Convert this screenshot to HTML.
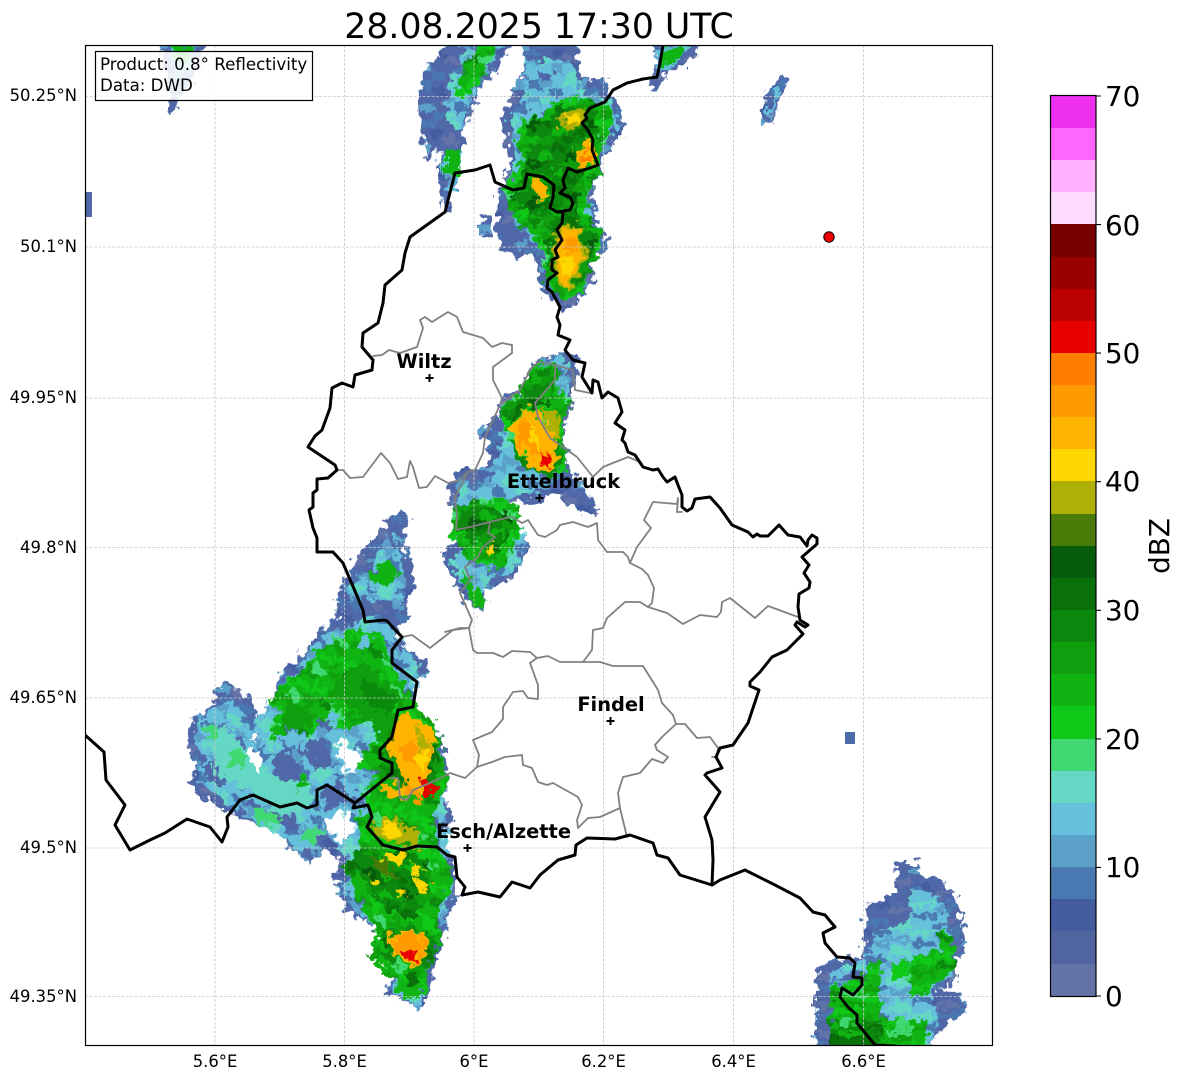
<!DOCTYPE html>
<html><head><meta charset="utf-8"><style>
html,body{margin:0;padding:0;background:#fff;width:1184px;height:1081px;overflow:hidden}
svg{display:block}
text{font-family:"DejaVu Sans","Liberation Sans",sans-serif;fill:#000}
.t{font-size:16.4px;fill:#111}
.l{font-size:19.4px;font-weight:bold;text-anchor:middle}
.c{font-size:27.8px}
.g{stroke:#c8c8c8;stroke-width:.8;stroke-dasharray:3 1.5;fill:none}
.b{fill:none;stroke:#000;stroke-width:3;stroke-linejoin:round;stroke-linecap:round}
.i{fill:none;stroke:#808080;stroke-width:1.8;stroke-linejoin:round;stroke-linecap:round}
</style></head><body>
<svg width="1184" height="1081" viewBox="0 0 1184 1081" xmlns="http://www.w3.org/2000/svg">
<defs>
<filter id="n" filterUnits="userSpaceOnUse" x="80" y="40" width="920" height="1010" color-interpolation-filters="sRGB">
<feTurbulence type="fractalNoise" baseFrequency="0.13" numOctaves="2" seed="4" result="t"/>
<feComponentTransfer in="t" result="q">
<feFuncR type="discrete" tableValues="0 0 .1 .2 .35 .45 .55 .65 .8 .9 1 1"/>
<feFuncG type="discrete" tableValues="0 0 .1 .2 .35 .45 .55 .65 .8 .9 1 1"/>
<feFuncA type="discrete" tableValues="1"/>
</feComponentTransfer>
<feDisplacementMap in="SourceGraphic" in2="q" scale="13" xChannelSelector="R" yChannelSelector="G"/>
</filter>
<pattern id="bq" width="60" height="40" patternUnits="userSpaceOnUse">
<rect width="60" height="40" fill="#66c0dc"/>
<rect x="0" y="0" width="12" height="8" fill="#5aa0c8"/><rect x="24" y="0" width="12" height="8" fill="#64d8c4"/><rect x="48" y="0" width="12" height="8" fill="#4a78b0"/>
<rect x="12" y="8" width="12" height="8" fill="#4a78b0"/><rect x="36" y="8" width="12" height="8" fill="#64d8c4"/>
<rect x="0" y="16" width="12" height="8" fill="#64d8c4"/><rect x="24" y="16" width="12" height="8" fill="#5aa0c8"/><rect x="48" y="16" width="12" height="8" fill="#5aa0c8"/>
<rect x="12" y="24" width="12" height="8" fill="#5aa0c8"/><rect x="36" y="24" width="12" height="8" fill="#4a78b0"/>
<rect x="0" y="32" width="12" height="8" fill="#5068a8"/><rect x="24" y="32" width="12" height="8" fill="#64d8c4"/>
</pattern>
<pattern id="bo" width="60" height="40" patternUnits="userSpaceOnUse">
<rect width="60" height="40" fill="#5068a8"/>
<rect x="0" y="0" width="12" height="8" fill="#4a78b0"/><rect x="36" y="0" width="12" height="8" fill="#5aa0c8"/>
<rect x="12" y="8" width="12" height="8" fill="#435da0"/><rect x="48" y="8" width="12" height="8" fill="#4a78b0"/>
<rect x="24" y="16" width="12" height="8" fill="#6373a8"/><rect x="0" y="24" width="12" height="8" fill="#5aa0c8"/>
<rect x="36" y="24" width="12" height="8" fill="#435da0"/><rect x="12" y="32" width="12" height="8" fill="#4a78b0"/><rect x="48" y="32" width="12" height="8" fill="#6373a8"/>
</pattern>
<pattern id="gq" width="60" height="40" patternUnits="userSpaceOnUse">
<rect width="60" height="40" fill="#10b412"/>
<rect x="0" y="0" width="12" height="8" fill="#10c818"/><rect x="24" y="0" width="12" height="8" fill="#0e9e0e"/><rect x="48" y="0" width="12" height="8" fill="#10c818"/>
<rect x="12" y="8" width="12" height="8" fill="#0e9e0e"/><rect x="36" y="8" width="12" height="8" fill="#10c818"/>
<rect x="0" y="16" width="12" height="8" fill="#40d870"/><rect x="24" y="16" width="12" height="8" fill="#10c818"/><rect x="48" y="16" width="12" height="8" fill="#0c880e"/>
<rect x="12" y="24" width="12" height="8" fill="#10c818"/><rect x="36" y="24" width="12" height="8" fill="#0e9e0e"/>
<rect x="0" y="32" width="12" height="8" fill="#0e9e0e"/><rect x="24" y="32" width="12" height="8" fill="#40d870"/>
</pattern>
<pattern id="dq" width="60" height="40" patternUnits="userSpaceOnUse">
<rect width="60" height="40" fill="#0c880e"/>
<rect x="0" y="0" width="12" height="8" fill="#0a700a"/><rect x="24" y="0" width="12" height="8" fill="#0e9e0e"/><rect x="48" y="0" width="12" height="8" fill="#065c0a"/>
<rect x="12" y="8" width="12" height="8" fill="#10b412"/><rect x="36" y="8" width="12" height="8" fill="#0a700a"/>
<rect x="0" y="16" width="12" height="8" fill="#0e9e0e"/><rect x="24" y="16" width="12" height="8" fill="#0a700a"/><rect x="48" y="16" width="12" height="8" fill="#10b412"/>
<rect x="12" y="24" width="12" height="8" fill="#0a700a"/><rect x="36" y="24" width="12" height="8" fill="#0e9e0e"/>
<rect x="0" y="32" width="12" height="8" fill="#10b412"/><rect x="24" y="32" width="12" height="8" fill="#065c0a"/>
</pattern>
<pattern id="bqs" href="#bq" patternTransform="rotate(42) scale(1.2 .9)"/>
<pattern id="bos" href="#bo" patternTransform="rotate(42) scale(1.2 .9)"/>
<pattern id="gqs" href="#gq" patternTransform="rotate(42) scale(1.2 .9)"/>
<pattern id="dqs" href="#dq" patternTransform="rotate(42) scale(1.2 .9)"/>
<pattern id="bqe" href="#bq" patternTransform="scale(2 .7)"/>
<pattern id="boe" href="#bo" patternTransform="scale(2 .7)"/>
<pattern id="gqe" href="#gq" patternTransform="scale(2 .7)"/>
<pattern id="dqe" href="#dq" patternTransform="scale(2 .7)"/>
<clipPath id="ax"><rect x="85" y="45" width="908" height="1001"/></clipPath>
</defs>
<text x="539" y="38" text-anchor="middle" style="font-size:34.7px">28.08.2025 17:30 UTC</text>
<g clip-path="url(#ax)">
<g filter="url(#n)">
<!-- north -->
<g fill="url(#bo)">
<polygon points="450,40 513,40 500,63 483,83 472,110 463,140 460,163 450,190 452,212 443,210 438,173 442,150 427,160 420,133 418,90 425,70"/>
<polygon points="520,40 577,40 580,73 590,83 610,78 608,95 617,100 623,120 622,137 608,153 600,173 593,187 597,217 607,237 608,248 593,260 593,283 577,303 563,313 553,300 543,293 537,270 530,253 517,260 497,240 497,193 503,187 510,167 507,150 503,117 513,90 527,70"/>
<polygon points="481,215 491,215 491,237 481,237"/>
<polygon points="647,40 700,40 697,57 680,68 663,77 657,93 650,90 653,73 658,57"/>
<polygon points="158,40 208,40 195,75 180,100 173,113 168,113 170,90 165,65"/>
<polygon points="783,75 786,82 780,105 768,125 760,125 765,100 772,85"/>
</g>
<g fill="url(#bq)">
<polygon points="470,40 505,40 485,75 470,105 460,130 445,120 450,80"/>
<polygon points="525,60 570,60 580,90 610,100 618,125 600,150 590,190 595,230 590,270 570,295 550,285 540,250 515,225 505,190 515,160 510,120 525,90"/>
<polygon points="655,45 690,45 675,65 660,78 656,65"/>
<polygon points="440,160 462,150 458,185 450,195"/>
<polygon points="170,45 200,45 188,70 178,90 174,70"/>
<polygon points="776,88 780,92 772,112 766,118"/>
</g>
<polygon fill="url(#gq)" points="480,40 498,40 490,65 470,95 455,95 465,65"/>
<polygon fill="#10b412" points="445,150 460,150 460,175 445,175"/>
<polygon fill="#10b412" points="172,45 192,45 186,62 178,62"/>
<polygon fill="#10b412" points="660,50 685,48 675,62 662,68"/>
<polygon fill="url(#gq)" points="523,120 540,117 560,100 583,97 607,103 613,110 610,133 600,153 600,173 590,187 587,217 603,230 600,253 587,273 583,293 563,300 547,287 543,253 533,237 513,217 503,190 513,173 523,163 517,143"/>
<polygon fill="url(#dq)" points="527,123 560,107 593,107 600,133 587,167 577,187 580,220 597,240 590,270 577,287 557,287 547,253 547,227 527,213 513,200 520,177 527,163"/>
<polygon fill="#aeb006" points="557,115 585,108 585,122 565,133"/>
<polygon fill="#ffd700" points="563,118 580,113 580,120 567,126"/>
<polygon fill="#ffb400" points="590,138 597,165 578,170 576,153"/>
<polygon fill="#ff7d00" points="586,150 592,162 580,164 580,156"/>
<polygon fill="#ffb400" points="532,180 540,180 550,197 537,200"/>
<polygon fill="#aeb006" points="558,226 580,224 586,258 580,274 568,292 555,282 553,247"/>
<polygon fill="#ffb400" points="562,230 577,228 582,257 577,270 567,288 557,280 557,247"/>
<polygon fill="#ff9a00" points="566,236 577,238 578,252 568,254"/>
<polygon fill="#ffd700" points="560,255 574,258 570,275 562,272"/>
<!-- Ettelbruck -->
<polygon fill="url(#bo)" points="557,350 577,355 575,390 572,398 565,427 567,450 567,465 598,503 597,515 583,513 550,493 543,500 523,503 517,500 503,507 530,547 520,570 507,580 490,588 477,583 487,603 478,613 463,597 453,580 442,555 453,543 450,533 453,510 450,483 463,467 480,470 490,457 480,427 493,418 500,420 498,407 507,393 520,390 533,360 553,357"/>
<polygon fill="url(#bq)" points="555,358 568,360 570,393 563,420 563,463 548,487 530,497 507,497 520,527 527,547 510,573 487,580 483,603 467,593 450,560 460,553 453,513 463,480 483,483 500,453 503,427 500,407 520,393 537,363"/>
<polygon fill="url(#gq)" points="535,363 557,367 560,393 572,397 563,420 565,450 567,465 553,477 533,473 520,463 507,437 500,410 520,390"/>
<polygon fill="url(#dq)" points="540,367 555,370 553,403 527,407 510,423 503,410 523,397"/>
<polygon fill="#0c880e" points="510,440 520,465 535,473 555,476 562,462 558,440 552,470 530,465"/>
<polygon fill="#ffb400" points="527,408 537,410 553,437 557,453 558,467 547,472 530,467 508,428"/>
<polygon fill="#aeb006" points="540,410 560,413 560,443 552,437"/>
<polygon fill="#ff9a00" points="520,420 533,427 548,457 533,457 517,437"/>
<polygon fill="#ffd700" points="530,425 540,440 542,450 530,440"/>
<polygon fill="#e60000" points="540,450 547,457 548,468 542,465"/>
<polygon fill="url(#gq)" points="453,507 473,500 503,497 517,507 520,532 503,570 487,565 467,560 450,537"/>
<polygon fill="url(#dq)" points="460,513 483,503 510,517 513,530 493,560 480,540 457,530"/>
<polygon fill="#ffd700" points="487,545 494,545 494,554 487,554"/>
<polygon fill="#10b412" points="462,570 473,583 487,603 478,610 470,600"/>
<!-- NW streak -->
<polygon fill="url(#bos)" points="390,517 400,508 410,520 403,533 415,585 403,607 407,620 390,640 350,640 335,600 357,557 375,535"/>
<polygon fill="url(#bqs)" points="380,545 395,530 402,560 405,595 395,620 360,625 345,610 355,580 372,565"/>
<polygon fill="#10b412" points="378,567 388,562 402,573 385,587 368,577"/>
<!-- SW mass -->
<polygon fill="url(#bos)" points="210,693 227,680 253,703 260,720 273,697 280,670 293,663 320,633 340,610 343,600 407,600 407,620 393,637 425,660 427,673 417,680 413,700 437,727 447,763 450,780 443,797 453,820 440,843 457,867 457,893 447,920 443,940 433,970 430,990 420,1010 383,990 393,980 370,953 380,933 347,910 333,877 342,863 323,848 310,863 287,843 270,823 243,820 200,797 188,783 197,770 187,747 193,717 217,703"/>
<polygon fill="url(#bqs)" points="197,720 230,697 253,723 277,693 320,637 380,613 420,667 413,700 433,730 443,767 443,800 447,827 447,867 453,887 440,920 423,990 420,1007 393,993 393,977 373,953 380,933 353,910 343,890 347,857 337,843 323,833 307,860 277,833 243,813 200,783 193,743"/>
<g fill="#5068a8">
<polygon points="225,750 240,735 250,755 235,765"/><polygon points="205,765 222,760 225,785 208,780"/><polygon points="270,760 290,750 305,775 285,785"/><polygon points="305,745 322,735 335,765 315,770"/><polygon points="320,790 340,780 350,800 330,810"/><polygon points="270,800 290,810 300,835 280,825"/>
</g>
<polygon fill="#64d8c4" points="215,735 225,725 240,745 260,760 280,780 310,780 315,810 280,815 250,790 215,775"/>
<g fill="#40d870">
<polygon points="206,728 220,726 220,740 206,740"/><polygon points="253,807 276,812 280,825 255,820"/><polygon points="305,828 322,830 315,845 300,840"/>
<polygon points="228,752 240,748 245,765 232,768"/>
</g>
<polygon fill="#10b412" points="296,778 308,778 310,788 296,792"/>
<polygon fill="url(#gqs)" points="267,700 293,677 320,650 353,627 383,637 393,667 413,700 437,727 443,763 450,780 440,800 433,827 440,853 453,867 450,887 437,917 443,937 427,970 427,990 413,997 407,990 387,977 370,953 377,933 367,917 347,873 360,840 357,817 370,810 360,797 380,770 357,770 367,747 383,733 383,723 373,720 343,730 320,720 310,740 290,727 270,743 273,723 280,710"/>
<g fill="#66c0dc">
<polygon points="356,640 368,636 370,650 358,652"/><polygon points="372,722 385,718 388,735 378,735"/>
<polygon points="330,712 340,715 335,725 325,722"/>
</g>
<polygon fill="#0e9e0e" points="327,693 360,660 380,677 407,700 397,710 393,733 380,747 370,720 343,703"/>
<polygon fill="#0a8a0c" points="360,675 385,690 400,705 385,715 365,700"/>
<polygon fill="#0e9e0e" points="283,710 307,703 317,717 300,730 283,723"/>
<polygon fill="url(#dqs)" points="385,745 397,720 437,735 440,770 428,790 400,785 382,770"/>
<polygon fill="#ffb400" points="397,720 407,712 435,732 431,760 425,780 431,790 421,795 407,783 393,757 387,750"/>
<polygon fill="#aeb006" points="415,725 430,740 428,755 418,745"/>
<polygon fill="#ff9a00" points="397,747 413,740 423,760 410,767"/>
<polygon fill="#ffd700" points="418,752 428,755 423,770 416,764"/>
<polygon fill="#ffb400" points="380,783 407,787 407,800 387,797"/>
<polygon fill="#ff9a00" points="408,782 424,800 420,804 405,792"/>
<polygon fill="#e60000" points="420,782 430,777 437,790 425,797"/>
<polygon fill="url(#dqs)" points="357,847 413,850 427,860 430,893 417,920 393,913 367,893 343,870"/>
<polygon fill="#4a7a08" points="370,855 385,860 400,880 380,875"/>
<polygon fill="#aeb006" points="377,823 387,817 420,833 420,847 387,843 373,830"/>
<polygon fill="#ffd700" points="379,825 388,820 402,832 392,840"/>
<g fill="#ffd700">
<polygon points="387,853 407,853 400,863 383,860"/><polygon points="413,877 430,883 420,897"/><polygon points="370,877 380,880 377,887"/><polygon points="397,887 407,893 400,897"/><polygon points="410,863 423,870 413,877"/>
</g>
<polygon fill="url(#dqs)" points="377,937 393,927 443,937 430,963 427,970 390,953"/>
<polygon fill="#10b412" points="395,985 410,978 425,985 415,1000 400,995"/>
<polygon fill="#0a700a" points="405,975 415,972 418,985 408,985"/>
<polygon fill="#ffb400" points="392,930 425,935 425,955 413,967 390,952"/>
<polygon fill="#ff9a00" points="397,933 423,937 423,953 413,963 393,950"/>
<polygon fill="#e60000" points="405,950 418,953 415,962 403,957"/>
<!-- holes -->
<g fill="#fff">
<polygon points="245,757 253,747 263,760 258,770"/>
<polygon points="247,735 258,735 255,742"/>
<polygon points="343,740 365,757 353,773 343,767 337,743"/>
<polygon points="323,827 340,810 357,827 343,843"/>
</g>
<!-- SE -->
<polygon fill="url(#boe)" points="905,862 917,862 918,875 930,877 943,883 955,892 963,930 967,955 957,960 957,980 937,990 960,993 965,1013 950,1023 937,1033 927,1060 815,1060 815,1000 817,967 830,960 863,957 865,907 887,900 897,893 895,868"/>
<polygon fill="url(#bqe)" points="910,887 920,887 943,900 950,930 953,977 933,987 933,1013 940,1017 937,1027 927,1060 830,1060 830,983 830,973 867,957 877,930 910,920"/>
<polygon fill="url(#gqe)" points="940,932 952,932 957,972 933,983 910,987 907,960 940,950"/>
<polygon fill="url(#gqe)" points="868,962 880,963 882,1060 830,1060 830,987 840,987 853,980 867,973"/>
<polygon fill="url(#gqe)" points="882,1017 927,1020 927,1060 882,1060"/>
<polygon fill="url(#gqe)" points="907,963 933,967 930,993 910,997"/>
<polygon fill="#10c818" points="892,963 907,963 907,980 892,980"/>
<polygon fill="url(#dqe)" points="830,1030 880,1012 888,1060 830,1060"/>
<polygon fill="#0a700a" points="830,1040 875,1036 880,1060 830,1060"/>
<polygon fill="#40d870" points="897,1018 910,1018 910,1030 897,1030"/>
</g>
<rect x="85" y="192" width="7" height="25" fill="#5068a8"/>
<rect x="845" y="732" width="10" height="12" fill="#4a6cab"/>
<!-- grid -->
<g class="g">
<path d="M215 45V1046M344.500 45V1046M474 45V1046M603.500 45V1046M733.500 45V1046M863.500 45V1046"/>
<path d="M85 96.500H993M85 247H993M85 398H993M85 547.500H993M85 698H993M85 848H993M85 996.500H993"/>
</g>
<!-- interior boundaries -->
<g class="i">
<path d="M373 356L382 355L389 350L400 353L417 347L423 328L420 320L425 317L432 322L448 312L457 317L463 332L483 338L492 347L502 343L512 345L512 353L493 367L493 380L502 398L500 405L485 437L483 453L475 470L467 472L460 480L448 483L435 476L427 487L419 488L413 467L410 461L407 477L398 479L390 463L381 453L363 477L350 478L343 470L337 470"/>
<path d="M500 405L520 390L530 370L538 362L555 365L555 380L535 403L538 417L550 438L563 447L577 457L593 477L603 467L628 457L640 462"/>
<path d="M555 365L573 370L575 390L590 393"/>
<path d="M467 474L455 497L457 517L456 530L470 527L490 522L510 517"/>
<path d="M490 522L488 533L495 537L482 548L478 557L465 567L470 580L460 593L472 620L469 628L460 628L445 632"/>
<path d="M512 517L522 523L528 520L538 535L545 537L557 530L560 525L573 522L588 527L597 523L598 540L607 552L623 552L628 557L630 563L642 569L648 575L654 588L652 603L648 607"/>
<path d="M630 563L637 547L651 528L644 520L653 502L677 504L678 498L677 512L682 512"/>
<path d="M402 637L412 635L430 648L453 630L469 628L473 650L477 653L493 653L503 657L512 651L530 652L537 658"/>
<path d="M530 663L537 658L548 656L560 662L582 662L600 662L613 666L643 666L658 690L662 703L673 715L676 724L685 724L697 738L710 737L718 748L717 757L712 757"/>
<path d="M583 662L592 650L593 630L603 628L607 618L625 602L640 602L648 607L667 613L683 624L700 615L717 617L721 612L722 602L730 598L755 618L768 606L798 617"/>
<path d="M530 663L538 685L538 699L528 698L523 691L513 692L503 707L503 719L492 732L473 740L479 755L477 767L465 778L450 773L437 780L413 790L407 800L400 798L398 778L390 778"/>
<path d="M477 767L492 762L505 757L522 755L523 765L532 768L538 782L547 785L553 783L578 797L582 805L577 820L578 828L588 818L600 817L620 808L627 837"/>
<path d="M676 724L662 737L655 745L657 750L668 757L663 763L652 759L640 773L623 777L618 793L620 808"/>
</g>
<!-- national border -->
<g class="b">
<path d="M663 45L660 63L657 77L643 79L627 83L613 90L605 102L590 108L585 115L587 118L582 123L588 130L593 140L592 150L598 165L590 168L577 172L568 168L563 180L565 188L560 193L570 197L573 203L570 210L557 212L550 208L553 197L554 185L543 177L527 174L524 188L513 190L495 182L490 165L475 170L455 173L445 212L410 237L405 253L402 270L385 285L383 303L378 323L363 333L362 347L373 360L372 370L355 375L353 387L342 383L332 388L330 408L322 430L315 436L308 447L320 455L335 465L337 470L328 478L317 479L317 490L313 493L313 507L309 510L313 528L317 538L317 552L333 552L343 563L363 610L365 622L383 620L387 621L402 637L392 650L392 663L417 682L413 707L398 710L392 737L380 750L380 758L392 763L392 773L355 803L327 785L317 790L317 805L307 808L297 803L280 807L253 795L240 800L227 817L228 827L222 842L210 827L187 819L165 833L150 840L130 850L115 825L125 805L106 780L104 752L85 735"/>
<path d="M355 803L353 808L368 805L372 817L367 827L383 845L403 850L417 846L437 847L447 855L455 857L457 877L465 887L462 895L478 892L500 897L512 882L530 888L540 875L558 860L575 855L576 845L587 838L615 839L630 835L653 843L657 855L668 858L680 875L712 885L720 880L745 870L775 885L800 898L813 912L825 915L835 927L823 933L825 943L837 957L850 958L855 963L853 977L862 978L862 985L853 995L842 988L840 997L848 1007L857 1015L857 1023L875 1045L895 1046"/>
<path d="M557 212L563 212L562 223L557 230L562 240L555 250L558 257L552 260L552 270L557 273L548 280L547 288L552 292L560 307L557 317L560 325L558 335L570 340L565 350L573 360L585 363L582 377L592 393L593 380L598 382L602 398L608 392L618 398L622 412L615 423L625 430L622 440L625 443L628 452L635 455L643 467L653 470L658 469L663 477L667 482L675 477L678 485L682 495L682 507L687 511L692 508L695 499L710 497L720 508L732 525L748 532L753 537L757 534L760 536L768 536L779 525L788 535L800 537L807 546L808 540L812 535L817 538L817 544L802 557L809 565L804 573L810 582L809 588L799 594L798 607L800 620L808 625L805 627L797 622L795 625L803 634L787 650L772 657L760 672L750 682L750 686L759 690L748 723L733 745L720 748L716 757L722 768L707 773L705 775L720 792L705 817L712 840L713 860L712 885"/>
</g>
</g>
<!-- markers -->
<g stroke="#000" stroke-width="2">
<path d="M425.500 378H433.500M429.500 374V382"/>
<path d="M535.500 498H543.500M539.500 494V502"/>
<path d="M606.500 721H614.500M610.500 717V725"/>
<path d="M463.500 848H471.500M467.500 844V852"/>
</g>
<circle cx="829" cy="237" r="5.200" fill="#f00000" stroke="#000" stroke-width="1"/>
<text class="l" x="424" y="368">Wiltz</text>
<text class="l" x="563.500" y="488">Ettelbruck</text>
<text class="l" x="611" y="711">Findel</text>
<text class="l" x="503.500" y="838">Esch/Alzette</text>
<!-- legend -->
<rect x="95.500" y="51.500" width="217" height="49" fill="#fff" fill-opacity=".88" stroke="#000" stroke-width="1.200"/>
<text x="100" y="70" style="font-size:16.67px">Product: 0.8° Reflectivity</text>
<text x="100" y="91" style="font-size:16.67px">Data: DWD</text>
<rect x="85.500" y="45.500" width="907" height="1000" fill="none" stroke="#000" stroke-width="1.200"/>
<!-- axis labels -->
<g class="t" text-anchor="end">
<text x="77" y="101">50.25°N</text>
<text x="77" y="252">50.1°N</text>
<text x="77" y="403">49.95°N</text>
<text x="77" y="553">49.8°N</text>
<text x="77" y="703">49.65°N</text>
<text x="77" y="853">49.5°N</text>
<text x="77" y="1002">49.35°N</text>
</g>
<g class="t" text-anchor="middle">
<text x="215" y="1067">5.6°E</text>
<text x="344.500" y="1067">5.8°E</text>
<text x="474" y="1067">6°E</text>
<text x="603.500" y="1067">6.2°E</text>
<text x="733.500" y="1067">6.4°E</text>
<text x="863.500" y="1067">6.6°E</text>
</g>
<!-- colorbar -->
<g shape-rendering="crispEdges">
<rect x="1051" y="96" width="45" height="33" fill="#ee30ee"/>
<rect x="1051" y="128" width="45" height="33" fill="#ff66ff"/>
<rect x="1051" y="160" width="45" height="33" fill="#ffb0ff"/>
<rect x="1051" y="192" width="45" height="33" fill="#ffdcff"/>
<rect x="1051" y="224" width="45" height="33" fill="#780000"/>
<rect x="1051" y="257" width="45" height="33" fill="#990000"/>
<rect x="1051" y="289" width="45" height="33" fill="#bb0000"/>
<rect x="1051" y="321" width="45" height="33" fill="#e60000"/>
<rect x="1051" y="353" width="45" height="33" fill="#ff7d00"/>
<rect x="1051" y="385" width="45" height="33" fill="#ff9a00"/>
<rect x="1051" y="417" width="45" height="33" fill="#ffb400"/>
<rect x="1051" y="449" width="45" height="33" fill="#ffd700"/>
<rect x="1051" y="481" width="45" height="33" fill="#aeb006"/>
<rect x="1051" y="514" width="45" height="33" fill="#4a7a08"/>
<rect x="1051" y="546" width="45" height="33" fill="#065c0a"/>
<rect x="1051" y="578" width="45" height="33" fill="#0a700a"/>
<rect x="1051" y="610" width="45" height="33" fill="#0c880e"/>
<rect x="1051" y="642" width="45" height="33" fill="#0e9e0e"/>
<rect x="1051" y="674" width="45" height="33" fill="#10b412"/>
<rect x="1051" y="706" width="45" height="33" fill="#10c818"/>
<rect x="1051" y="739" width="45" height="33" fill="#40d870"/>
<rect x="1051" y="771" width="45" height="33" fill="#64d8c4"/>
<rect x="1051" y="803" width="45" height="33" fill="#66c0dc"/>
<rect x="1051" y="835" width="45" height="33" fill="#5aa0c8"/>
<rect x="1051" y="867" width="45" height="33" fill="#4a78b0"/>
<rect x="1051" y="899" width="45" height="33" fill="#435da0"/>
<rect x="1051" y="931" width="45" height="33" fill="#5065a0"/>
<rect x="1051" y="964" width="45" height="32" fill="#6373a8"/>
</g>
<rect x="1050.500" y="95.500" width="45.500" height="901" fill="none" stroke="#000" stroke-width="1.200"/>
<path d="M1096 96H1101M1096 224.600H1101M1096 353.100H1101M1096 481.700H1101M1096 610.300H1101M1096 738.900H1101M1096 867.400H1101M1096 996H1101" stroke="#000" stroke-width="1.100"/>
<g class="c">
<text x="1105" y="106">70</text>
<text x="1105" y="235">60</text>
<text x="1105" y="363">50</text>
<text x="1105" y="491">40</text>
<text x="1105" y="620">30</text>
<text x="1105" y="749">20</text>
<text x="1105" y="877">10</text>
<text x="1105" y="1006">0</text>
</g>
<text class="c" transform="translate(1169,546) rotate(-90)" text-anchor="middle">dBZ</text>
</svg>
</body></html>
